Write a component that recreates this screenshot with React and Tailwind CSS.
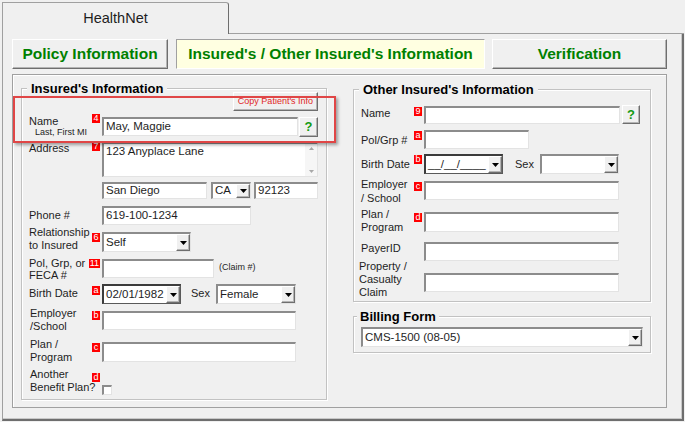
import React from 'react';

const sunken =
  'bg-white border-t-2 border-l-2 border-r border-b border-t-[#8c8c8c] border-l-[#8c8c8c] border-r-[#e3e3e3] border-b-[#e3e3e3]';
const darkSunken =
  'bg-white border-t-2 border-l-2 border-r border-b border-t-[#3c3c3c] border-l-[#3c3c3c] border-r-[#5a5a5a] border-b-[#5a5a5a]';
const raised =
  'bg-[#f0f0f0] border border-t-white border-l-white border-r-[#6e6e6e] border-b-[#6e6e6e] shadow-[inset_-1px_-1px_0_#b4b4b4]';
const groupBox = 'border border-[#c2c2c2] shadow-[1px_1px_0_#fff,inset_1px_1px_0_#fff]';

function Badge({ children }) {
  return (
    <div className="h-[9px] min-w-[8px] px-[1px] bg-[#ff0000] text-white text-[9px] leading-[9px] flex items-center justify-center">
      {children}
    </div>
  );
}

function DownArrow({ color = '#000' }) {
  return (
    <svg width="7" height="4" viewBox="0 0 7 4">
      <path d="M0 0h7L3.5 4z" fill={color} />
    </svg>
  );
}

function Combo({ value, className, dark }) {
  return (
    <div className={`${dark ? darkSunken : sunken} flex ${className}`}>
      <div className="flex-1 pl-[2px] text-[11.5px] flex items-center whitespace-nowrap overflow-hidden">{value}</div>
      <div className={`w-[14px] ${raised} flex items-center justify-center`}>
        <DownArrow />
      </div>
    </div>
  );
}

function Input({ value, className }) {
  return (
    <div className={`${sunken} pl-[2px] text-[11.5px] flex items-center ${className}`}>{value}</div>
  );
}

function HelpBtn({ className }) {
  return (
    <div className={`${raised} flex items-center justify-center text-[13px] font-bold text-[#129a12] ${className}`}>?</div>
  );
}

export default function App() {
  return (
    <div className="relative w-[685px] h-[422px] overflow-hidden bg-[#f0f0f0] text-[#1e1e1e] font-['Liberation_Sans',Arial,sans-serif]">
      <div className="pt-[2px] pl-[2px]">
        <div className="flex h-[32px]">
          <div className="w-[227px] h-[32px] border-l border-t border-r border-l-[#a0a0a0] border-t-[#a0a0a0] border-r-[#6e6e6e] rounded-tr-[3px] flex items-center justify-center text-[14.5px]">
            HealthNet
          </div>
          <div className="w-[455px] h-[32px] border-b border-[#a0a0a0]" />
        </div>

        <div className="w-[682px] h-[387px] border-l border-l-[#a0a0a0] border-r-2 border-b-2 border-r-[#6e6e6e] border-b-[#6e6e6e] shadow-[inset_-1px_-1px_0_#c8c8c8] pl-[9px] pt-[5px]">
          <div className="flex h-[30px] text-[15.5px] font-bold text-[#008000]">
            <div className={`w-[156px] ${raised} flex items-center justify-center`}>Policy Information</div>
            <div className="ml-[8px] w-[309px] bg-[#ffffe1] border border-t-[#a0a0a0] border-l-[#a0a0a0] border-r-white border-b-white flex items-center justify-center">
              Insured's / Other Insured's Information
            </div>
            <div className={`ml-[7px] w-[175px] ${raised} flex items-center justify-center`}>Verification</div>
          </div>

          <div className="mt-[5px] w-[655px] h-[334px] border border-[#a0a0a0] shadow-[inset_1px_1px_0_#fff] flex items-start">
            {/* Insured's Information */}
            <div className={`ml-[8px] mt-[13px] w-[306px] h-[312px] ${groupBox} pl-[7px] text-[11px]`}>
              <div className="flex -mt-[8px] h-[30px]">
                <div className="-ml-[2px] px-[4px] h-[15px] bg-[#f0f0f0] text-[13px] font-bold leading-[15px] text-black">
                  Insured's Information
                </div>
                <div className={`ml-auto mr-[8px] mt-[11px] w-[85px] h-[19px] ${raised} flex items-center justify-center text-[9px] text-[#e02828]`}>
                  Copy Patient's Info
                </div>
              </div>

              <div className="flex mt-[3px] h-[23px]">
                <div className="w-[58px] mt-[2px] whitespace-nowrap">
                  <div className="leading-[11px]">Name</div>
                  <div className="pl-[6px] text-[9px] leading-[10px]">Last, First MI</div>
                </div>
                <div className="w-[15px] pr-[2px] flex justify-end items-start"><Badge>4</Badge></div>
                <Input value="May, Maggie" className="mt-[3px] w-[196px] h-[19px]" />
                <HelpBtn className="ml-[1px] mt-[3px] w-[19px] h-[20px]" />
              </div>

              <div className="flex mt-[5px] h-[35px]">
                <div className="w-[58px] leading-[12px]">Address</div>
                <div className="w-[15px] pr-[2px] flex justify-end items-start"><Badge>7</Badge></div>
                <div className={`${sunken} w-[216px] h-[35px] flex`}>
                  <div className="flex-1 pl-[2px] pt-[1px] text-[11.5px] leading-[13px]">123 Anyplace Lane</div>
                  <div className="w-[12px] bg-[#f6f6f6] flex flex-col items-center justify-between py-[3px]">
                    <svg width="5" height="3" viewBox="0 0 5 3"><path d="M0 3h5L2.5 0z" fill="#a8a8a8" /></svg>
                    <svg width="5" height="3" viewBox="0 0 5 3"><path d="M0 0h5L2.5 3z" fill="#a8a8a8" /></svg>
                  </div>
                </div>
              </div>

              <div className="flex mt-[5px] h-[17px] ml-[73px]">
                <Input value="San Diego" className="w-[105px] h-[17px]" />
                <Combo value="CA" className="ml-[4px] w-[40px] h-[17px]" />
                <Input value="92123" className="ml-[3px] w-[64px] h-[17px]" />
              </div>

              <div className="flex mt-[7px] h-[19px]">
                <div className="w-[73px] mt-[3px] leading-[12px]">Phone #</div>
                <Input value="619-100-1234" className="w-[149px] h-[19px]" />
              </div>

              <div className="flex mt-[7px] h-[20px]">
                <div className="w-[58px] -mt-[6px] leading-[13px] whitespace-nowrap">Relationship<br />to Insured</div>
                <div className="w-[15px] pr-[2px] mt-[1px] flex justify-end items-start"><Badge>6</Badge></div>
                <Combo value="Self" className="w-[89px] h-[20px]" />
              </div>

              <div className="flex mt-[7px] h-[19px]">
                <div className="w-[58px] -mt-[2px] leading-[12px] whitespace-nowrap">Pol, Grp, or<br />FECA #</div>
                <div className="w-[15px] pr-[2px] flex justify-end items-start"><Badge>11</Badge></div>
                <Input value="" className="w-[112px] h-[19px]" />
                <div className="ml-[5px] mt-[3px] text-[9px] leading-[10px]">(Claim #)</div>
              </div>

              <div className="flex mt-[6px] h-[20px]">
                <div className="w-[58px] mt-[3px] leading-[12px] whitespace-nowrap">Birth Date</div>
                <div className="w-[15px] pr-[2px] mt-[2px] flex justify-end items-start"><Badge>a</Badge></div>
                <Combo dark value="02/01/1982" className="w-[79px] h-[20px]" />
                <div className="ml-[10px] w-[25px] mt-[3px] leading-[12px]">Sex</div>
                <Combo value="Female" className="w-[80px] h-[20px]" />
              </div>

              <div className="flex mt-[7px] h-[19px]">
                <div className="w-[58px] -mt-[4px] pl-[1px] leading-[13px] whitespace-nowrap">Employer<br />/School</div>
                <div className="w-[15px] pr-[2px] flex justify-end items-start"><Badge>b</Badge></div>
                <Input value="" className="w-[194px] h-[19px]" />
              </div>

              <div className="flex mt-[12px] h-[20px]">
                <div className="w-[58px] -mt-[4px] pl-[1px] leading-[13px] whitespace-nowrap">Plan /<br />Program</div>
                <div className="w-[15px] pr-[2px] mt-[1px] flex justify-end items-start"><Badge>c</Badge></div>
                <Input value="" className="w-[194px] h-[20px]" />
              </div>

              <div className="flex mt-[6px] h-[27px]">
                <div className="w-[58px] pl-[1px] leading-[13px] whitespace-nowrap">Another<br />Benefit Plan?</div>
                <div className="w-[15px] pr-[2px] mt-[5px] flex justify-end items-start"><Badge>d</Badge></div>
                <div className={`${sunken} mt-[17px] w-[10px] h-[10px]`} />
              </div>
            </div>

            {/* right column */}
            <div className="ml-[26px] flex flex-col text-[11px]">
              <div className={`mt-[14px] w-[298px] h-[213px] ${groupBox} pl-[7px]`}>
                <div className="flex -mt-[8px] h-[15px]">
                  <div className="-ml-[2px] px-[4px] h-[15px] bg-[#f0f0f0] text-[13px] font-bold leading-[15px] text-black">
                    Other Insured's Information
                  </div>
                </div>

                <div className="flex mt-[8px] h-[19px]">
                  <div className="w-[48px] mt-[2px] leading-[12px]">Name</div>
                  <div className="w-[15px] pr-[2px] mt-[2px] flex justify-end items-start"><Badge>9</Badge></div>
                  <Input value="" className="mt-[1px] w-[196px] h-[18px]" />
                  <HelpBtn className="ml-[2px] w-[18px] h-[19px]" />
                </div>

                <div className="flex mt-[6px] h-[19px]">
                  <div className="w-[48px] mt-[4px] leading-[12px] whitespace-nowrap">Pol/Grp #</div>
                  <div className="w-[15px] pr-[2px] mt-[1px] flex justify-end items-start"><Badge>a</Badge></div>
                  <Input value="" className="w-[105px] h-[19px]" />
                </div>

                <div className="flex mt-[5px] h-[20px]">
                  <div className="w-[48px] mt-[4px] leading-[12px] whitespace-nowrap">Birth Date</div>
                  <div className="w-[15px] pr-[2px] mt-[1px] flex justify-end items-start"><Badge>b</Badge></div>
                  <Combo dark value="__/__/____" className="w-[79px] h-[20px]" />
                  <div className="ml-[12px] w-[25px] mt-[4px] leading-[12px]">Sex</div>
                  <Combo value="" className="w-[79px] h-[20px]" />
                </div>

                <div className="flex mt-[7px] h-[19px]">
                  <div className="w-[48px] -mt-[4px] leading-[14px] whitespace-nowrap">Employer<br />/ School</div>
                  <div className="w-[15px] pr-[2px] mt-[1px] flex justify-end items-start"><Badge>c</Badge></div>
                  <Input value="" className="w-[195px] h-[19px]" />
                </div>

                <div className="flex mt-[12px] h-[20px]">
                  <div className="w-[48px] -mt-[4px] leading-[13px] whitespace-nowrap">Plan /<br />Program</div>
                  <div className="w-[15px] pr-[2px] mt-[1px] flex justify-end items-start"><Badge>d</Badge></div>
                  <Input value="" className="w-[195px] h-[20px]" />
                </div>

                <div className="flex mt-[10px] h-[19px]">
                  <div className="w-[63px] leading-[12px]">PayerID</div>
                  <Input value="" className="w-[195px] h-[19px]" />
                </div>

                <div className="flex mt-[12px] h-[19px]">
                  <div className="w-[63px] -ml-[2px] mr-[2px] -mt-[13px] leading-[13px] whitespace-nowrap">
                    Property /<br />Casualty<br />Claim
                  </div>
                  <Input value="" className="w-[195px] h-[19px]" />
                </div>
              </div>

              <div className={`mt-[14px] w-[298px] h-[37px] ${groupBox} pl-[7px]`}>
                <div className="flex -mt-[8px] h-[15px]">
                  <div className="-ml-[4px] px-[3px] h-[15px] bg-[#f0f0f0] text-[13px] font-bold leading-[15px] text-black">
                    Billing Form
                  </div>
                </div>
                <Combo value="CMS-1500 (08-05)" className="mt-[3px] w-[282px] h-[20px]" />
              </div>
            </div>
          </div>
        </div>
      </div>

      <div className="absolute left-[13px] top-[96px] w-[323px] h-[47px] border-2 border-[#e04646] shadow-[2px_2px_3px_rgba(0,0,0,0.35)]" />
    </div>
  );
}
